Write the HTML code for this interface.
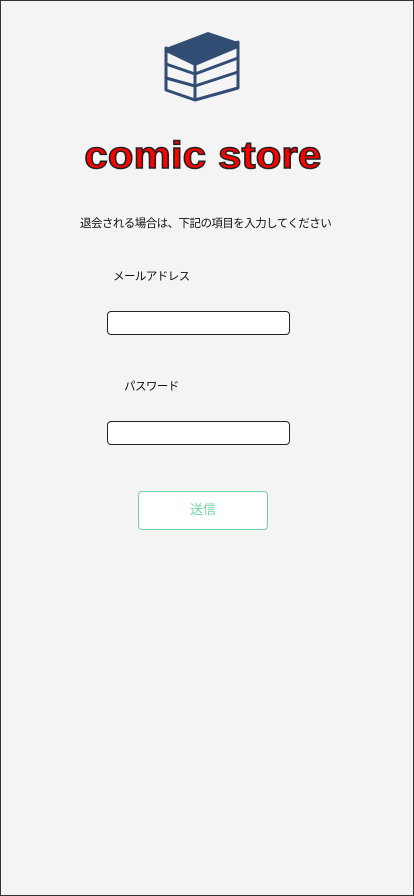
<!DOCTYPE html>
<html><head><meta charset="utf-8"><style>
*{margin:0;padding:0;box-sizing:border-box}
body{width:414px;height:896px;background:#f4f4f4;position:relative;overflow:hidden;font-family:"Liberation Sans","Noto Sans CJK JP",sans-serif;color:#111}
.frame{position:absolute;left:0;top:0;width:414px;height:896px;border:1px solid #333;pointer-events:none}
.a{position:absolute}
.title{left:-5px;width:414px;top:134px;text-align:center;font-weight:bold;font-size:38px;color:#ff0000;-webkit-text-stroke:1.5px #222;letter-spacing:0.2px;transform:scaleX(1.1);transform-origin:198px 0;line-height:44px}
.t{font-size:11.5px;white-space:nowrap;letter-spacing:-0.55px}
.in{left:107px;width:183px;height:24px;border:1px solid #222;border-radius:4px;background:#fff}
.btn{left:138px;top:491px;width:130px;height:39px;border:1.5px solid #6fd4a0;border-radius:4px;background:#fff;color:#6fd4a0;font-size:13px;text-align:center;line-height:36px}
</style></head><body>
<svg class="a" style="left:162px;top:28px" width="80" height="74" viewBox="0 0 80 74">
<polygon points="4,20 46,4 76,14 76,20 33,38 4,24" fill="#324d74"/>
<g fill="none" stroke="#324d74" stroke-width="3" stroke-linejoin="round">
<polygon points="4,20 33,30 76,14 76,60 33,72 4,62"/>
<line x1="33" y1="30" x2="33" y2="72"/>
<polyline points="4,36 33,46 76,30"/>
<polyline points="4,50 33,58 76,44"/>
</g>
</svg>
<div class="a title">comic store</div>
<div class="a t" style="left:80px;top:215px">退会される場合は、下記の項目を入力してください</div>
<div class="a t" style="left:113px;top:268px">メールアドレス</div>
<div class="a in" style="top:311px"></div>
<div class="a t" style="left:124px;top:378px">パスワード</div>
<div class="a in" style="top:421px"></div>
<div class="a btn">送信</div>
<div class="frame"></div>
</body></html>
